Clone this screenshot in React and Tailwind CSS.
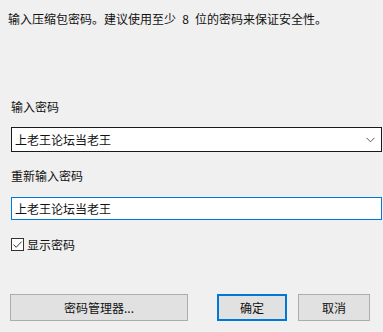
import React from 'react';

const font = { fontFamily: '"Noto Sans CJK SC", "Microsoft YaHei", sans-serif' };

const PasswordDialog = () => {
    return (
        <div
            className="w-[383px] h-[332px] bg-[#f0f0f0] text-[12px] leading-[16px] text-[#111] flex flex-col overflow-hidden"
            style={font}
        >
            {/* Hint */}
            <p className="pt-[11px] pl-[8px] whitespace-nowrap">
                输入压缩包密码。建议使用至少<span className="inline-block w-[19px] text-center">8</span>位的密码来保证安全性。
            </p>

            <div className="px-[11px] w-[371px] box-content flex flex-col">
                <label className="mt-[72px]">输入密码</label>
                <div className="mt-[12px] h-[25px] bg-white border border-[#1a1a1a] flex items-center justify-between pl-[3px] pr-[5px]">
                    <span>上老王论坛当老王</span>
                    <svg width="9" height="6" viewBox="0 0 9 6" className="mr-[1px]">
                        <path d="M0.5 0.8 L4.5 4.8 L8.5 0.8" fill="none" stroke="#5a5a5a" strokeWidth="1" />
                    </svg>
                </div>

                <label className="mt-[16px]">重新输入密码</label>
                <div className="mt-[13px] h-[23px] bg-white border border-[#0078d7] flex items-center pl-[3px]">
                    <span>上老王论坛当老王</span>
                </div>

                <div className="mt-[18px] flex items-center h-[13px]">
                    <span className="w-[13px] h-[13px] border border-[#333333] bg-white flex items-center justify-center">
                        <svg width="11" height="11" viewBox="0 0 11 11">
                            <path d="M1.5 5.5 L4.2 8.3 L9.6 2.6" fill="none" stroke="#333333" strokeWidth="1" />
                        </svg>
                    </span>
                    <span className="ml-[3px]">显示密码</span>
                </div>
            </div>

            {/* Buttons */}
            <div className="mt-[43px] pl-[10px] flex items-center">
                <button className="w-[178px] h-[27px] bg-[#e1e1e1] border border-[#adadad] flex items-center justify-center">
                    密码管理器...
                </button>
                <button className="ml-[29px] w-[70px] h-[27px] bg-[#e1e1e1] border-2 border-[#0078d7] flex items-center justify-center">
                    确定
                </button>
                <button className="ml-[11px] w-[72px] h-[27px] bg-[#e1e1e1] border border-[#adadad] flex items-center justify-center">
                    取消
                </button>
            </div>
        </div>
    );
};

export default PasswordDialog;
